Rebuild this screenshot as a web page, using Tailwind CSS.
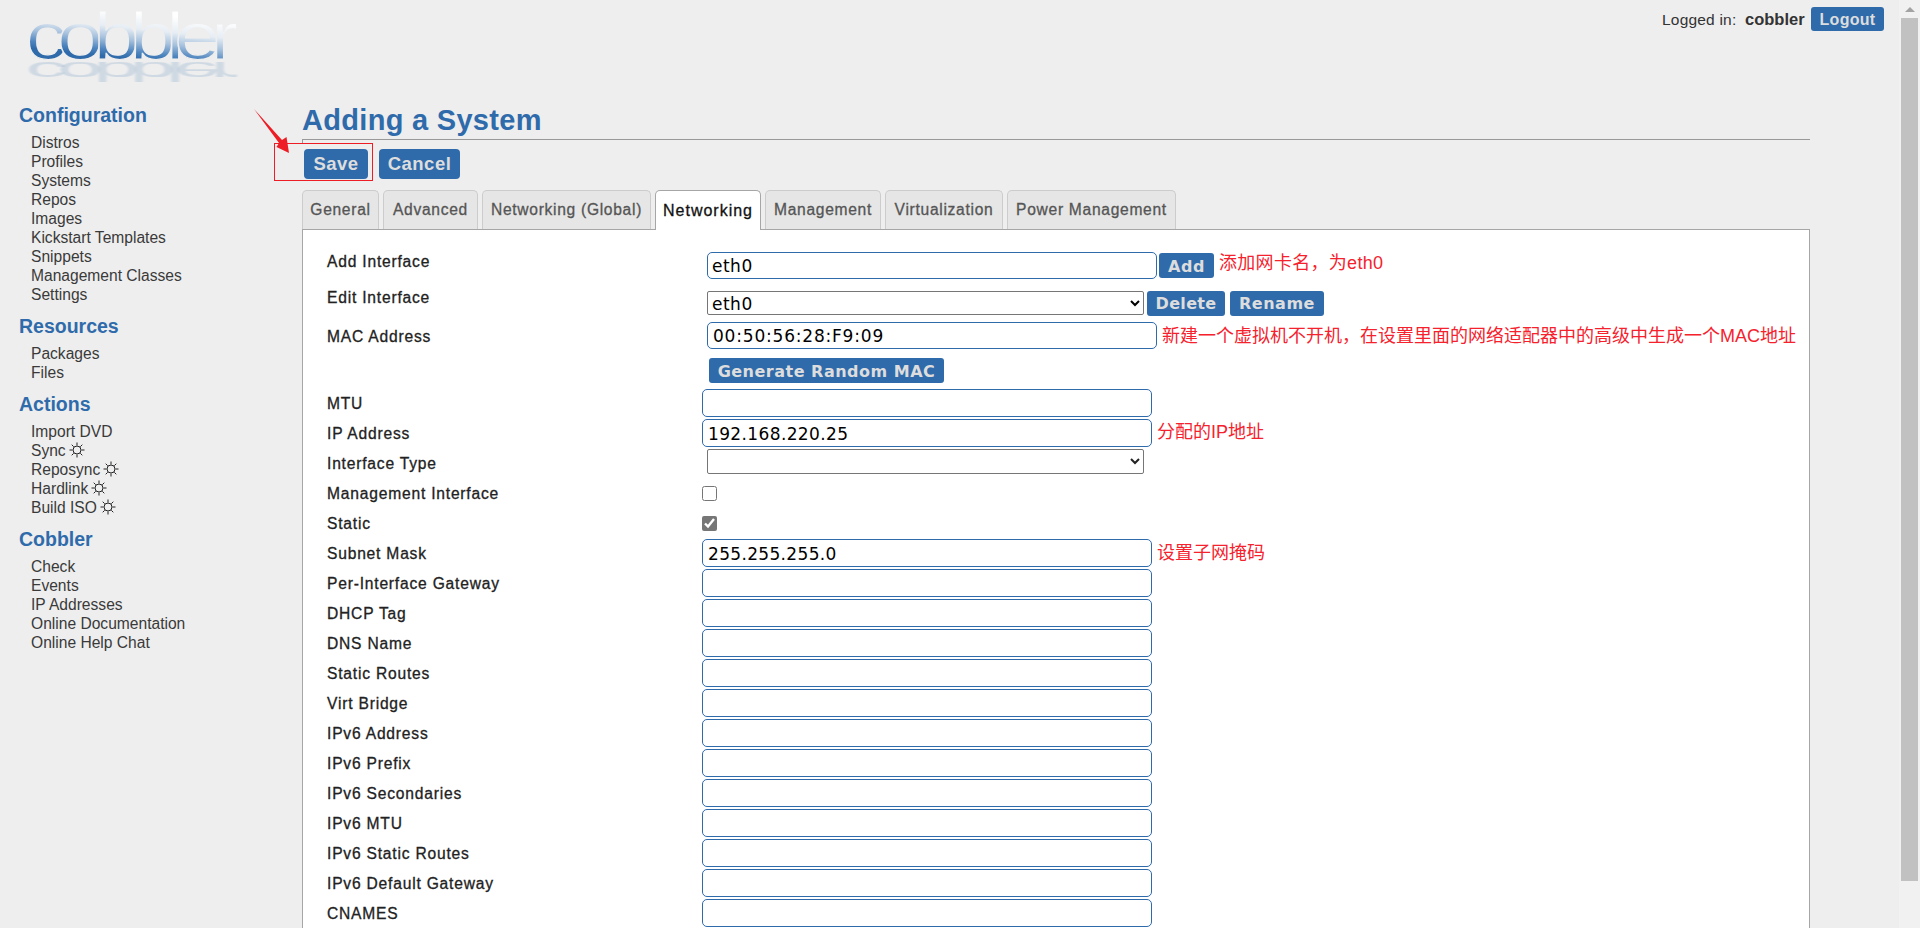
<!DOCTYPE html>
<html lang="en">
<head>
  <meta charset="UTF-8" />
  <title>Cobbler Web Interface</title>
  <script src="https://cdn.jsdelivr.net/npm/@tailwindcss/browser@4"></script>
</head>
<body class="bg-[#eeeeee] h-screen overflow-hidden relative font-['Liberation_Sans',sans-serif] text-[#333]">

  <!-- scrollbar -->
  <div class="absolute right-0 top-0 bottom-0 w-[21px] bg-[#f1f1f1] flex flex-col items-center">
    <div class="h-[18px] flex items-center justify-center">
      <div class="w-0 h-0 border-x-[5px] border-x-transparent border-b-[5px] border-b-[#a3a3a3]"></div>
    </div>
    <div class="w-[17px] h-[863px] bg-[#c1c1c1]"></div>
  </div>

  <!-- login box -->
  <div class="absolute left-[1662px] top-[7px] flex items-center h-[24px]">
    <span class="w-[76px] pt-[1px] text-[15.5px] tracking-[0.2px] whitespace-nowrap">Logged in:</span>
    <b class="w-[58px] ml-[7px] pt-[1px] text-[16.5px] whitespace-nowrap">cobbler</b>
    <a class="ml-[8px] w-[73px] h-[24px] pt-[1px] rounded-[3px] bg-[#2f6bab] text-[#dddddd] font-bold text-[16px] tracking-[0.3px] flex items-center justify-center">Logout</a>
  </div>

  <div class="flex">
    <!-- sidebar -->
    <div class="w-[302px] shrink-0">
      <svg width="240" height="90" class="block ml-[10px]" viewBox="10 0 240 90">
        <defs>
          <linearGradient id="logo" gradientUnits="userSpaceOnUse" x1="100" y1="14" x2="94" y2="60">
            <stop offset="0" stop-color="#ffffff"/>
            <stop offset="0.35" stop-color="#e6edf4"/>
            <stop offset="0.6" stop-color="#a9c3de"/>
            <stop offset="0.85" stop-color="#4f86bf"/>
            <stop offset="1" stop-color="#2f6bab"/>
          </linearGradient>
          <filter id="soft"><feGaussianBlur stdDeviation="1"/></filter>
        </defs>
        <g transform="translate(27 0) scale(1.25 1)">
          <text x="-1" y="59" font-family="Liberation Sans" font-size="66" textLength="170" lengthAdjust="spacing" fill="url(#logo)" stroke="#eeeeee" stroke-width="1.2">cobbler</text>
        </g>
        <g transform="translate(27 62) scale(1.25 -0.42)" filter="url(#soft)">
          <text x="-1" y="0" font-family="Liberation Sans" font-size="66" textLength="170" lengthAdjust="spacing" fill="#2f6bab" fill-opacity="0.16">cobbler</text>
        </g>
      </svg>

      <div class="pl-[19px] mt-[14px] text-[15.6px] leading-[19px] text-[#3a3a3a]">
        <h3 class="text-[19.5px] leading-[22px] font-bold text-[#2f6bab]">Configuration</h3>
        <ul class="pl-[12px] mt-[6.8px]">
          <li>Distros</li>
          <li>Profiles</li>
          <li>Systems</li>
          <li>Repos</li>
          <li>Images</li>
          <li>Kickstart Templates</li>
          <li>Snippets</li>
          <li>Management Classes</li>
          <li>Settings</li>
        </ul>
        <h3 class="text-[19.5px] leading-[22px] font-bold text-[#2f6bab] mt-[11.2px]">Resources</h3>
        <ul class="pl-[12px] mt-[6.8px]">
          <li>Packages</li>
          <li>Files</li>
        </ul>
        <h3 class="text-[19.5px] leading-[22px] font-bold text-[#2f6bab] mt-[11.2px]">Actions</h3>
        <ul class="pl-[12px] mt-[6.8px]">
          <li>Import DVD</li>
          <li class="flex items-center gap-[3px]">Sync
            <svg width="16" height="16" viewBox="0 0 16 16" fill="none" stroke="#222" stroke-width="1"><circle cx="8" cy="8" r="4"/><path d="M8 0.5v3M8 12.5v3M0.5 8h3M12.5 8h3M2.7 2.7l2 2M11.3 11.3l2 2M2.7 13.3l2-2M11.3 4.7l2-2"/></svg></li>
          <li class="flex items-center gap-[3px]">Reposync
            <svg width="16" height="16" viewBox="0 0 16 16" fill="none" stroke="#222" stroke-width="1"><circle cx="8" cy="8" r="4"/><path d="M8 0.5v3M8 12.5v3M0.5 8h3M12.5 8h3M2.7 2.7l2 2M11.3 11.3l2 2M2.7 13.3l2-2M11.3 4.7l2-2"/></svg></li>
          <li class="flex items-center gap-[3px]">Hardlink
            <svg width="16" height="16" viewBox="0 0 16 16" fill="none" stroke="#222" stroke-width="1"><circle cx="8" cy="8" r="4"/><path d="M8 0.5v3M8 12.5v3M0.5 8h3M12.5 8h3M2.7 2.7l2 2M11.3 11.3l2 2M2.7 13.3l2-2M11.3 4.7l2-2"/></svg></li>
          <li class="flex items-center gap-[3px]">Build ISO
            <svg width="16" height="16" viewBox="0 0 16 16" fill="none" stroke="#222" stroke-width="1"><circle cx="8" cy="8" r="4"/><path d="M8 0.5v3M8 12.5v3M0.5 8h3M12.5 8h3M2.7 2.7l2 2M11.3 11.3l2 2M2.7 13.3l2-2M11.3 4.7l2-2"/></svg></li>
        </ul>
        <h3 class="text-[19.5px] leading-[22px] font-bold text-[#2f6bab] mt-[11.2px]">Cobbler</h3>
        <ul class="pl-[12px] mt-[6.8px]">
          <li>Check</li>
          <li>Events</li>
          <li>IP Addresses</li>
          <li>Online Documentation</li>
          <li>Online Help Chat</li>
        </ul>
      </div>
    </div>

    <!-- content -->
    <div class="w-[1508px] shrink-0 pt-[104px]">
      <h1 class="text-[29px] leading-[33px] tracking-[0.3px] font-bold text-[#2f6bab] border-b border-[#999] h-[36px]">Adding a System</h1>
      <div class="h-[4px] border-l border-[#999]"></div>

      <div class="flex gap-[11px] ml-[2px] mt-[5px]">
        <a class="w-[64px] h-[30px] rounded-[4px] bg-[#2f6bab] text-[#dddddd] font-bold text-[18.5px] tracking-[0.5px] flex items-center justify-center">Save</a>
        <a class="w-[81px] h-[30px] rounded-[4px] bg-[#2f6bab] text-[#dddddd] font-bold text-[18.5px] tracking-[0.5px] flex items-center justify-center">Cancel</a>
      </div>

      <!-- tabs -->
      <div class="flex gap-[4px] mt-[11px] h-[39px] relative z-10 text-[15.6px] tracking-[0.7px] [-webkit-text-stroke:0.3px]">
        <a class="w-[77px] border border-b-0 border-[#cccccc] rounded-t-[5px] bg-[#e6e6e6] text-[#555] flex items-center justify-center">General</a>
        <a class="w-[95px] border border-b-0 border-[#cccccc] rounded-t-[5px] bg-[#e6e6e6] text-[#555] flex items-center justify-center">Advanced</a>
        <a class="w-[169px] border border-b-0 border-[#cccccc] rounded-t-[5px] bg-[#e6e6e6] text-[#555] flex items-center justify-center">Networking (Global)</a>
        <a class="w-[106px] h-[40px] border border-b-0 border-[#a6a6a6] rounded-t-[5px] bg-white text-[#111] text-[16px] tracking-[1px] flex items-center justify-center">Networking</a>
        <a class="w-[116px] border border-b-0 border-[#cccccc] rounded-t-[5px] bg-[#e6e6e6] text-[#555] flex items-center justify-center">Management</a>
        <a class="w-[118px] border border-b-0 border-[#cccccc] rounded-t-[5px] bg-[#e6e6e6] text-[#555] flex items-center justify-center">Virtualization</a>
        <a class="w-[169px] border border-b-0 border-[#cccccc] rounded-t-[5px] bg-[#e6e6e6] text-[#555] flex items-center justify-center">Power Management</a>
      </div>

      <!-- panel -->
      <div class="bg-white border border-b-0 border-[#a6a6a6] pl-[24px] pt-[22px] h-[699px] text-[15.6px] tracking-[0.8px] text-[#222] [&_label]:[-webkit-text-stroke:0.3px] [&_label]:w-[375px] [&_label]:shrink-0">
        <div class="flex h-[39px] items-start">
          <label class="leading-[19px]">Add Interface</label>
          <input value="eth0" class="ml-[5px] w-[450px] h-[27px] pt-[1px] bg-white border border-[#2f6bab] rounded-[5px] px-[4px] font-['DejaVu_Sans',sans-serif] text-[17px] tracking-[0.5px] text-black" />
          <a class="ml-[2px] mt-[1px] w-[55px] h-[25px] pt-[2px] rounded-[3px] bg-[#2f6bab] text-[#dddddd] font-bold font-['DejaVu_Sans',sans-serif] text-[16px] tracking-[0.5px] flex items-center justify-center">Add</a>
          <span class="ml-[5px] font-['Liberation_Sans','Noto_Sans_CJK_SC',sans-serif] text-[18px] tracking-[0.3px] leading-[22px] text-[#f5222d]">添加网卡名，为eth0</span>
        </div>
        <div class="flex h-[31px] items-start">
          <label class="leading-[19px] -mt-[3px]">Edit Interface</label>
          <select class="ml-[5px] w-[437px] h-[24px] pt-[1px] bg-white border border-[#767676] rounded-[2px] pl-0 font-['DejaVu_Sans',sans-serif] text-[17px] tracking-[0.5px] text-black"><option>eth0</option></select>
          <a class="ml-[3px] w-[78px] h-[25px] pt-[1px] rounded-[3px] bg-[#2f6bab] text-[#dddddd] font-bold font-['DejaVu_Sans',sans-serif] text-[16px] tracking-[0.3px] flex items-center justify-center">Delete</a>
          <a class="ml-[5px] w-[94px] h-[25px] pt-[1px] rounded-[3px] bg-[#2f6bab] text-[#dddddd] font-bold font-['DejaVu_Sans',sans-serif] text-[16px] tracking-[0.5px] flex items-center justify-center">Rename</a>
        </div>
        <div class="flex h-[36px] items-start">
          <label class="leading-[19px] mt-[5px]">MAC Address</label>
          <input value="00:50:56:28:F9:09" class="ml-[5px] w-[450px] h-[27px] pt-[1px] bg-white border border-[#2f6bab] rounded-[5px] px-[5px] font-['DejaVu_Sans',sans-serif] text-[17px] tracking-[0.8px] text-black" />
          <span class="ml-[5px] font-['Liberation_Sans','Noto_Sans_CJK_SC',sans-serif] text-[18px] tracking-normal leading-[28px] text-[#f5222d]">新建一个虚拟机不开机，在设置里面的网络适配器中的高级中生成一个MAC地址</span>
        </div>
        <div class="flex h-[31px] items-start">
          <label class="leading-[19px]"></label>
          <a class="ml-[7px] w-[235px] h-[25px] pt-[2px] rounded-[3px] bg-[#2f6bab] text-[#dddddd] font-bold font-['DejaVu_Sans',sans-serif] text-[16px] tracking-[0.5px] flex items-center justify-center">Generate Random MAC</a>
        </div>

        <div class="flex h-[30px] items-start"><label class="leading-[30px]">MTU</label><input class="w-[450px] h-[28px] bg-white border border-[#2f6bab] rounded-[5px]" /></div>
        <div class="flex h-[30px] items-start"><label class="leading-[30px]">IP Address</label><input value="192.168.220.25" class="w-[450px] h-[28px] pt-[1px] bg-white border border-[#2f6bab] rounded-[5px] px-[5px] font-['DejaVu_Sans',sans-serif] text-[17px] tracking-[0.37px] text-black" /><span class="ml-[5px] font-['Liberation_Sans','Noto_Sans_CJK_SC',sans-serif] text-[18px] tracking-normal leading-[27px] text-[#f5222d]">分配的IP地址</span></div>
        <div class="flex h-[30px] items-start"><label class="leading-[30px]">Interface Type</label><select class="ml-[5px] w-[437px] h-[25px] bg-white border border-[#767676] rounded-[2px] text-[17px]"><option></option></select></div>
        <div class="flex h-[30px] items-start"><label class="leading-[30px]">Management Interface</label><input type="checkbox" class="mt-[7px] w-[15px] h-[15px]" /></div>
        <div class="flex h-[30px] items-start"><label class="leading-[30px]">Static</label><input type="checkbox" checked class="mt-[7px] w-[15px] h-[15px] accent-[#767676]" /></div>
        <div class="flex h-[30px] items-start"><label class="leading-[30px]">Subnet Mask</label><input value="255.255.255.0" class="w-[450px] h-[28px] pt-[1px] bg-white border border-[#2f6bab] rounded-[5px] px-[5px] font-['DejaVu_Sans',sans-serif] text-[17px] tracking-[0.33px] text-black" /><span class="ml-[5px] font-['Liberation_Sans','Noto_Sans_CJK_SC',sans-serif] text-[18px] tracking-normal leading-[28px] text-[#f5222d]">设置子网掩码</span></div>
        <div class="flex h-[30px] items-start"><label class="leading-[30px]">Per-Interface Gateway</label><input class="w-[450px] h-[28px] bg-white border border-[#2f6bab] rounded-[5px]" /></div>
        <div class="flex h-[30px] items-start"><label class="leading-[30px]">DHCP Tag</label><input class="w-[450px] h-[28px] bg-white border border-[#2f6bab] rounded-[5px]" /></div>
        <div class="flex h-[30px] items-start"><label class="leading-[30px]">DNS Name</label><input class="w-[450px] h-[28px] bg-white border border-[#2f6bab] rounded-[5px]" /></div>
        <div class="flex h-[30px] items-start"><label class="leading-[30px]">Static Routes</label><input class="w-[450px] h-[28px] bg-white border border-[#2f6bab] rounded-[5px]" /></div>
        <div class="flex h-[30px] items-start"><label class="leading-[30px]">Virt Bridge</label><input class="w-[450px] h-[28px] bg-white border border-[#2f6bab] rounded-[5px]" /></div>
        <div class="flex h-[30px] items-start"><label class="leading-[30px]">IPv6 Address</label><input class="w-[450px] h-[28px] bg-white border border-[#2f6bab] rounded-[5px]" /></div>
        <div class="flex h-[30px] items-start"><label class="leading-[30px]">IPv6 Prefix</label><input class="w-[450px] h-[28px] bg-white border border-[#2f6bab] rounded-[5px]" /></div>
        <div class="flex h-[30px] items-start"><label class="leading-[30px]">IPv6 Secondaries</label><input class="w-[450px] h-[28px] bg-white border border-[#2f6bab] rounded-[5px]" /></div>
        <div class="flex h-[30px] items-start"><label class="leading-[30px]">IPv6 MTU</label><input class="w-[450px] h-[28px] bg-white border border-[#2f6bab] rounded-[5px]" /></div>
        <div class="flex h-[30px] items-start"><label class="leading-[30px]">IPv6 Static Routes</label><input class="w-[450px] h-[28px] bg-white border border-[#2f6bab] rounded-[5px]" /></div>
        <div class="flex h-[30px] items-start"><label class="leading-[30px]">IPv6 Default Gateway</label><input class="w-[450px] h-[28px] bg-white border border-[#2f6bab] rounded-[5px]" /></div>
        <div class="flex h-[28px] items-start"><label class="leading-[30px]">CNAMES</label><input class="w-[450px] h-[28px] bg-white border border-[#2f6bab] rounded-[5px]" /></div>
      </div>
    </div>
  </div>

  <!-- red annotations on top of the screenshot -->
  <div class="absolute left-[274px] top-[143px] w-[99px] h-[38px] border border-[#ee1c25]"></div>
  <svg class="absolute left-[250px] top-[105px]" width="45" height="52" viewBox="0 0 45 52">
    <path d="M4 4 L32 35 L36.5 32 L39 48 L26.5 42 L29 38 Z" fill="#ee1c25"/>
  </svg>
</body>
</html>
